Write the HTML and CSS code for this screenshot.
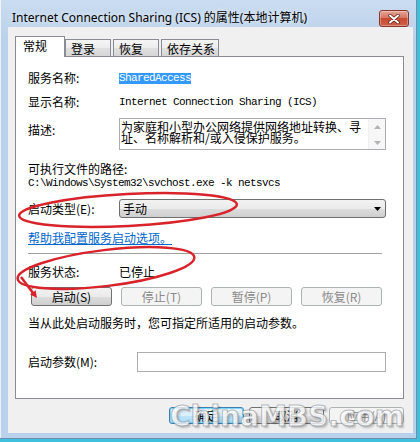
FILE: index.html
```html
<!DOCTYPE html>
<html lang="zh-CN">

<head>
    <meta charset="UTF-8" />
    <title>Internet Connection Sharing (ICS) 的属性(本地计算机)</title>
    <link rel="stylesheet" href="styles.css">
</head>

<body>
    <div class="window">
        <div class="titlebar">
            <span class="title">Internet Connection Sharing (ICS) 的属性(本地计算机)</span>
            <button class="close-btn" aria-label="关闭">
                <svg width="12" height="10" viewBox="0 0 12 10">
                    <path d="M2 1.5 L10 8.5 M10 1.5 L2 8.5" stroke="#5a1d14" stroke-width="3.4" stroke-linecap="round" />
                    <path d="M2 1.5 L10 8.5 M10 1.5 L2 8.5" stroke="#fff" stroke-width="2" stroke-linecap="round" />
                </svg>
            </button>
        </div>

        <div class="client">
            <ul class="tabs">
                <li class="tab active">常规</li>
                <li class="tab">登录</li>
                <li class="tab">恢复</li>
                <li class="tab">依存关系</li>
            </ul>

            <div class="panel">
                <div class="field">
                    <span class="label">服务名称:</span>
                    <span class="mono selected">SharedAccess</span>
                </div>
                <div class="field gap-10">
                    <span class="label">显示名称:</span>
                    <span class="mono">Internet Connection Sharing (ICS)</span>
                </div>
                <div class="field field-top gap-9">
                    <span class="label label-desc">描述:</span>
                    <div class="desc-box">
                        <div class="desc-text">为家庭和小型办公网络提供网络地址转换、寻址、名称解析和/或入侵保护服务。</div>
                        <div class="scrollbar">
                            <svg width="7" height="4" viewBox="0 0 7 4"><path d="M0 4 L3.5 0 L7 4 Z" fill="#b4b4b4" /></svg>
                            <svg width="7" height="4" viewBox="0 0 7 4"><path d="M0 0 L3.5 4 L7 0 Z" fill="#b4b4b4" /></svg>
                        </div>
                    </div>
                </div>

                <div class="path-block">
                    <div>可执行文件的路径:</div>
                    <div class="mono">C:\Windows\System32\svchost.exe -k netsvcs</div>
                </div>

                <div class="field gap-8">
                    <span class="label">启动类型(E):</span>
                    <div class="select">
                        <span>手动</span>
                        <svg width="7" height="4" viewBox="0 0 7 4"><path d="M0 0 L3.5 4 L7 0 Z" fill="#000" /></svg>
                    </div>
                </div>

                <a class="help-link" href="#">帮助我配置服务启动选项。</a>

                <hr class="separator">

                <div class="field gap-10">
                    <span class="label">服务状态:</span>
                    <span>已停止</span>
                </div>

                <div class="actions">
                    <button class="btn">启动(S)</button>
                    <button class="btn" disabled>停止(T)</button>
                    <button class="btn" disabled>暂停(P)</button>
                    <button class="btn" disabled>恢复(R)</button>
                </div>

                <p class="hint">当从此处启动服务时，您可指定所适用的启动参数。</p>

                <div class="field gap-22">
                    <span class="label label-wide">启动参数(M):</span>
                    <div class="text-input"></div>
                </div>
            </div>

            <div class="dialog-buttons">
                <button class="btn btn-default">确定</button>
                <button class="btn">取消</button>
                <button class="btn" disabled>应用(A)</button>
            </div>
        </div>
    </div>

    <!-- red annotation marks drawn over the dialog -->
    <svg class="marks" width="420" height="442" viewBox="0 0 420 442">
        <ellipse cx="128" cy="210" rx="109" ry="16" transform="rotate(-3 128 210)" />
        <ellipse cx="106" cy="268" rx="89" ry="18" transform="rotate(-7 106 268)" />
        <path d="M21 277 L33 293" />
        <polygon points="37,298 30,294.5 35.6,290.3" />
    </svg>

    <div class="watermark">ChinaMBS.com</div>
</body>

</html>
```

FILE: styles.css
```css
/* Reset & base */
* {
    margin: 0;
    padding: 0;
    box-sizing: border-box;
}

body {
    width: 420px;
    height: 442px;
    overflow: hidden;
    position: relative;
    background-color: #3fc1de;
    color: #000;
    font-family: "Noto Sans CJK SC", sans-serif;
    font-size: 12px;
    line-height: 14px;
}

button {
    font-family: inherit;
    font-size: 12px;
}

/* Window frame */
.window {
    width: 417px;
    height: 439px;
    display: flex;
    flex-direction: column;
    padding: 0 3px 5px 8px;
    background: linear-gradient(180deg, #cadcf0 0%, #bad1ea 40px, #b9d1ea 100%);
    border-right: 1px solid #6f8cab;
    border-bottom: 1px solid #6f8cab;
    box-shadow: inset 1px 0 0 rgba(255, 255, 255, 0.7);
}

.titlebar {
    height: 27px;
    flex-shrink: 0;
    display: flex;
    justify-content: space-between;
    padding: 10px 4px 0 4px;
}

.title {
    font-family: "Noto Sans", "Noto Sans CJK SC", sans-serif;
    font-size: 12px;
    line-height: 16px;
    text-shadow: 0 0 6px rgba(255, 255, 255, 0.9);
}

.close-btn {
    width: 30px;
    height: 17px;
    display: flex;
    align-items: center;
    justify-content: center;
    border: 1px solid #86372a;
    border-radius: 3px;
    background: linear-gradient(180deg, #e6a597 0%, #d67762 45%, #c74a32 50%, #cf6249 100%);
    box-shadow: inset 0 0 0 1px rgba(255, 255, 255, 0.3);
}

/* Client area */
.client {
    flex: 1;
    background-color: #f0f0f0;
    padding: 9px 9px 8px 7px;
}

.tabs {
    display: flex;
    align-items: flex-end;
    height: 20px;
    list-style: none;
}

.tab {
    min-width: 46px;
    height: 17px;
    padding: 2px 3px 0 5px;
    margin-right: 2px;
    border: 1px solid #898c95;
    border-bottom: none;
    background: linear-gradient(180deg, #f5f5f5 0%, #ececec 50%, #e0e0e0 51%, #d6d6d6 100%);
}

.tab.active {
    width: 50px;
    height: 21px;
    margin-right: 0;
    margin-bottom: -1px;
    padding-left: 7px;
    position: relative;
    z-index: 1;
    background: #fff;
}

.panel {
    background: #fff;
    border: 1px solid #898c95;
    padding: 14px 17px 26px 12px;
}

.field {
    display: flex;
    align-items: center;
}

.field-top {
    align-items: flex-start;
}

.gap-8 { margin-top: 8px; }
.gap-9 { margin-top: 9px; }
.gap-10 { margin-top: 10px; }
.gap-22 { margin-top: 22px; }

.label {
    width: 91px;
    flex-shrink: 0;
}

.label-desc {
    padding-top: 5px;
}

.label-wide {
    width: 109px;
}

.mono {
    font-family: "Liberation Mono", "Noto Sans CJK SC", monospace;
    font-size: 11px;
    letter-spacing: -0.6px;
}

.selected {
    background-color: #3399ff;
    color: #fff;
    line-height: 11px;
    height: 11px;
}

/* Description box */
.desc-box {
    flex: 1;
    height: 32px;
    display: flex;
    border: 1px solid #abadb3;
    background: #fff;
}

.desc-text {
    flex: 1;
    padding: 2px 0 0 1px;
    line-height: 11px;
}

.scrollbar {
    width: 17px;
    display: flex;
    flex-direction: column;
    justify-content: space-between;
    align-items: center;
    padding: 6px 0 4px;
    background: #f7f7f7;
    border-left: 1px solid #f0f0f0;
}

.path-block {
    margin-top: 11px;
    line-height: 15px;
}

/* Startup type */
.select {
    flex: 1;
    height: 19px;
    display: flex;
    align-items: center;
    justify-content: space-between;
    padding: 0 4px 0 3px;
    border: 1px solid #707070;
    border-radius: 3px;
    background: linear-gradient(180deg, #f2f2f2 0%, #ebebeb 50%, #dddddd 51%, #cfcfcf 100%);
}

.help-link {
    display: inline-block;
    margin-top: 13px;
    color: #0066cc;
    text-decoration: underline;
}

.separator {
    margin: 8px 4px 0 0;
    border: none;
    border-top: 1px solid #a0a0a0;
    border-bottom: 1px solid #fff;
}

/* Buttons */
.actions {
    display: flex;
    gap: 9px;
    margin-top: 8px;
    padding-left: 3px;
}

.btn {
    height: 19px;
    width: 81px;
    border: 1px solid #707070;
    border-radius: 3px;
    background: linear-gradient(180deg, #f2f2f2 0%, #ebebeb 50%, #dddddd 51%, #cfcfcf 100%);
    color: #000;
    line-height: 15px;
}

.btn:disabled {
    border-color: #adb2b5;
    background: #f4f4f4;
    color: #8a8a8a;
}

.hint {
    margin-top: 10px;
}

.text-input {
    flex: 1;
    height: 20px;
    border: 1px solid #abadb3;
    background: #fff;
}

.dialog-buttons {
    display: flex;
    justify-content: flex-end;
    gap: 5px;
    margin-top: 8px;
}

.dialog-buttons .btn {
    width: 75px;
    height: 17px;
    line-height: 13px;
}

.btn-default {
    border-color: #3c7fb1;
    background: linear-gradient(180deg, #eaf6fd 0%, #d9f0fc 50%, #bee6fd 51%, #a7d9f5 100%);
    box-shadow: inset 0 0 0 1px #7fd6f7;
}

/* Overlays */
.marks {
    position: absolute;
    left: 0;
    top: 0;
    pointer-events: none;
    fill: none;
    stroke: #d8232b;
    stroke-width: 2.5;
}

.marks polygon {
    fill: #d8232b;
    stroke: none;
}

.watermark {
    position: absolute;
    left: 170px;
    top: 403px;
    font-family: "DejaVu Sans", sans-serif;
    font-weight: 700;
    font-size: 28px;
    line-height: 28px;
    color: rgba(255, 255, 255, 0.78);
    -webkit-text-stroke: 1px rgba(120, 130, 140, 0.55);
    text-shadow: 2px 2px 2px rgba(0, 0, 0, 0.22);
    pointer-events: none;
}
```
